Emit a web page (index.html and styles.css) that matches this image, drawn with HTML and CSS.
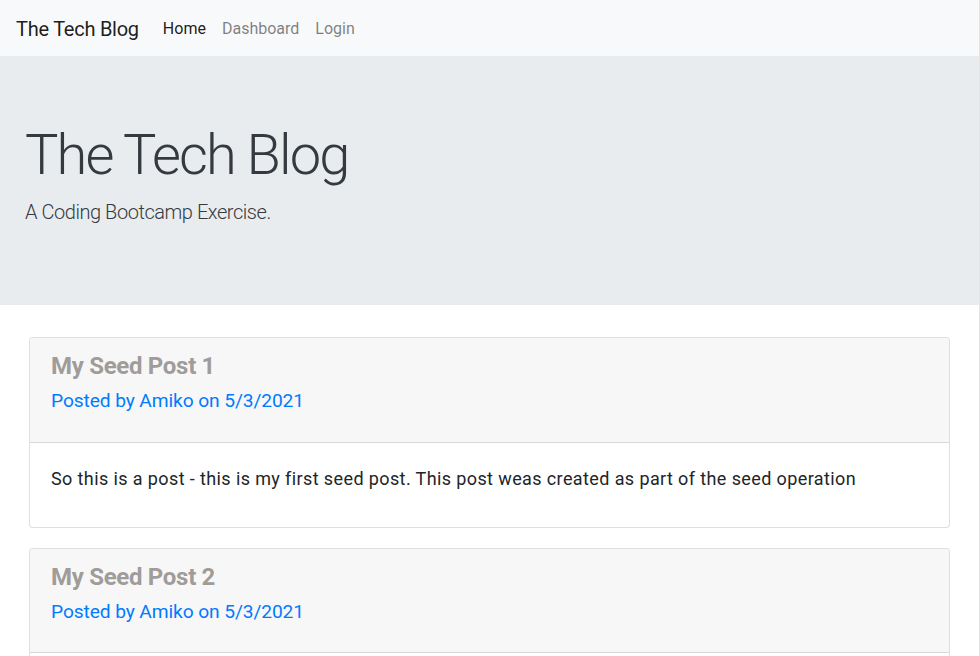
FILE: index.html
```html
<!DOCTYPE html>
<html lang="en">
<head>
<meta charset="utf-8">
<title>The Tech Blog</title>
<link rel="stylesheet" href="styles.css">
</head>
<body>
<div class="page">
  <nav class="navbar">
    <a class="brand" href="#">The Tech Blog</a>
    <ul class="nav">
      <li><a class="nav-link active" href="#">Home</a></li>
      <li><a class="nav-link" href="#">Dashboard</a></li>
      <li><a class="nav-link" href="#">Login</a></li>
    </ul>
  </nav>
  <header class="jumbotron">
    <h1 class="display">The Tech Blog</h1>
    <p class="lead">A Coding Bootcamp Exercise.</p>
  </header>
  <main class="posts">
    <article class="card">
      <div class="card-header">
        <h2 class="post-title">My Seed Post 1</h2>
        <p class="post-meta">Posted by Amiko on 5/3/2021</p>
      </div>
      <div class="card-body">
        <p>So this is a post - this is my first seed post. This post weas created as part of the seed operation</p>
      </div>
    </article>
    <article class="card">
      <div class="card-header">
        <h2 class="post-title">My Seed Post 2</h2>
        <p class="post-meta">Posted by Amiko on 5/3/2021</p>
      </div>
      <div class="card-body">
        <p>So this is a post - this is my second seed post. This post weas created as part of the seed operation</p>
      </div>
    </article>
  </main>
</div>
</body>
</html>
```

FILE: styles.css
```css
* { box-sizing: border-box; }
html, body { margin: 0; padding: 0; }
body {
  font-family: Roboto, "Noto Sans", "Liberation Sans", sans-serif;
  font-size: 16px;
  line-height: 1.5;
  color: #212529;
  background: #fff;
}
.page {
  width: 980px;
  min-height: 656px;
  border-right: 1px solid #e4e4e4;
}
.navbar {
  display: flex;
  align-items: center;
  height: 56px;
  padding: 2px 16px 0;
  background: #f8f9fa;
}
.brand {
  font-size: 20px;
  line-height: 30px;
  letter-spacing: -0.25px;
  color: rgba(0,0,0,.9);
  text-decoration: none;
  margin-right: 16px;
}
.nav {
  display: flex;
  list-style: none;
  margin: 0;
  padding: 0;
}
.nav-link {
  display: block;
  padding: 8px;
  font-size: 16px;
  color: rgba(0,0,0,.5);
  text-decoration: none;
}
.nav-link.active { color: rgba(0,0,0,.9); }
.jumbotron {
  background: #e9ecef;
  padding: 66px 25px 64px;
  margin-bottom: 32px;
}
.display {
  margin: 0 0 8px;
  font-size: 56px;
  font-weight: 300;
  line-height: 1.2;
  letter-spacing: -1.9px;
  color: #343a40;
}
.lead {
  margin: 0 0 14px;
  font-size: 20px;
  font-weight: 300;
  line-height: 1.5;
  letter-spacing: -0.45px;
  color: #343a40;
}
.posts {
  padding: 0 29px;
}
.card {
  border: 1px solid rgba(0,0,0,.125);
  border-radius: 4px;
  margin-bottom: 20px;
  background: #fff;
  overflow: hidden;
}
.card-header {
  background: #f7f7f7;
  padding: 14px 21px 12px;
  border-bottom: 1px solid rgba(0,0,0,.125);
}
.post-title {
  margin: 0 0 6px;
  font-size: 24px;
  font-weight: 700;
  line-height: 1.2;
  letter-spacing: -0.3px;
  color: #9f9c9a;
}
.post-meta {
  margin: 0 0 14px;
  font-size: 19.2px;
  line-height: 1.5;
  letter-spacing: -0.1px;
  color: #007bff;
}
.card-body {
  padding: 22px 21px 19px;
}
.card-body p {
  margin: 0 0 16px;
  font-size: 18px;
  line-height: 1.5;
  letter-spacing: 0.39px;
}
```
